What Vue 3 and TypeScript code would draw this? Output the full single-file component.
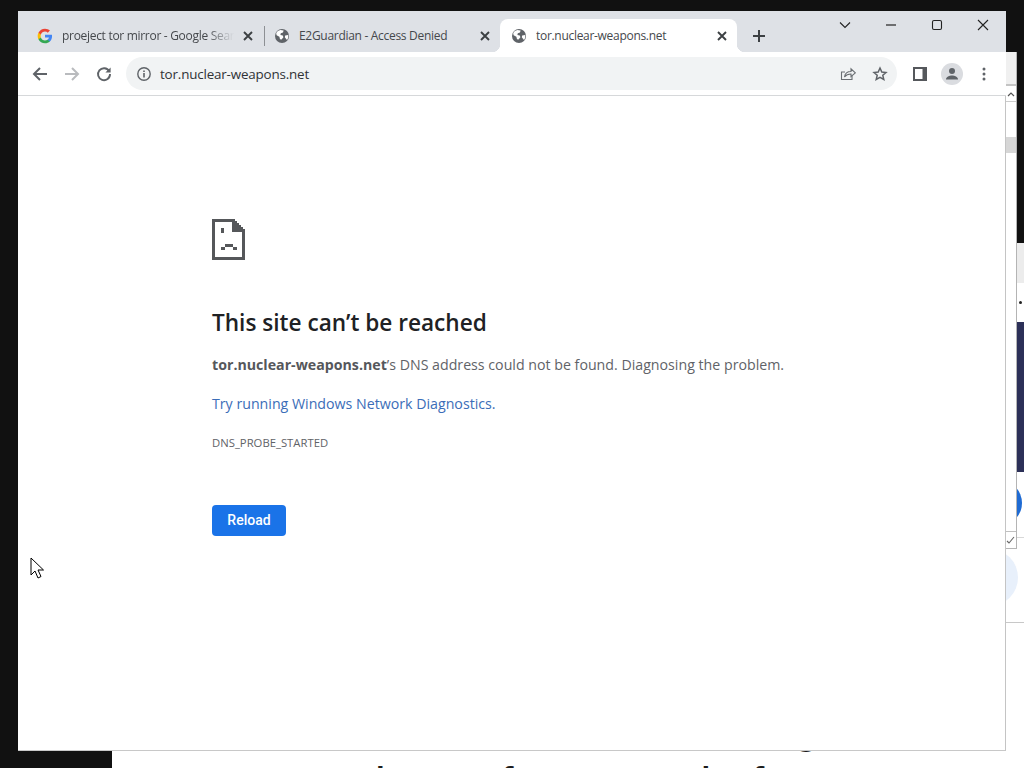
<script setup lang="ts">
interface Tab {
  title: string
  active: boolean
  favicon: 'google' | 'globe'
  fade: boolean
}

const tabs: Tab[] = [
  { title: 'proeject tor mirror - Google Search', active: false, favicon: 'google', fade: true },
  { title: 'E2Guardian - Access Denied', active: false, favicon: 'globe', fade: false },
  { title: 'tor.nuclear-weapons.net', active: true, favicon: 'globe', fade: false },
]
</script>

<template>
  <div class="desktop">
    <!-- windows behind the browser -->
    <div class="back-page">
      <div class="bp-top"></div>
      <div class="bp-nav"><span class="bp-dot"></span></div>
      <div class="bp-hero"></div>
      <div class="bp-band one"><span class="bp-circle"></span></div>
      <div class="bp-band two"><span class="bp-soft"></span></div>
      <div class="bp-text">
        <div class="line first">g</div>
        <div class="line second">mirror of some url of</div>
      </div>
    </div>
    <div class="back-dialog">
      <div class="bd-head"></div>
      <div class="bd-arrow">
        <svg width="10" height="10" viewBox="0 0 10 10"><path d="M2 7l3-3 3 3" fill="none" stroke="#555" stroke-width="1.2" /></svg>
      </div>
      <div class="bd-track"><span class="bd-thumb"></span></div>
      <div class="bd-check">
        <svg width="10" height="10" viewBox="0 0 10 10"><path d="M1 6l2 2 5-6" fill="none" stroke="#666" stroke-width="1.1" /></svg>
      </div>
    </div>

    <!-- browser -->
    <div class="browser">
      <div class="tabstrip">
        <div
          v-for="tab in tabs"
          :key="tab.title"
          class="tab"
          :class="{ active: tab.active }"
        >
          <svg v-if="tab.favicon === 'google'" class="fav" viewBox="0 0 24 24">
            <path fill="#4285F4" d="M22.56 12.25c0-.78-.07-1.53-.2-2.25H12v4.26h5.92c-.26 1.37-1.04 2.53-2.21 3.31v2.77h3.57c2.08-1.92 3.28-4.74 3.28-8.09z" />
            <path fill="#34A853" d="M12 23c2.97 0 5.46-.98 7.28-2.66l-3.57-2.77c-.98.66-2.23 1.06-3.71 1.06-2.86 0-5.29-1.93-6.16-4.53H2.18v2.84C3.99 20.53 7.7 23 12 23z" />
            <path fill="#FBBC05" d="M5.84 14.09c-.22-.66-.35-1.36-.35-2.09s.13-1.43.35-2.09V7.07H2.18C1.43 8.55 1 10.22 1 12s.43 3.45 1.18 4.93l3.66-2.84z" />
            <path fill="#EA4335" d="M12 5.38c1.62 0 3.06.56 4.21 1.64l3.15-3.15C17.45 2.09 14.97 1 12 1 7.7 1 3.99 3.47 2.18 7.07l3.66 2.84c.87-2.6 3.3-4.53 6.16-4.53z" />
          </svg>
          <svg v-else class="fav" viewBox="0 0 16 16">
            <circle cx="8" cy="8" r="7" fill="#5f6368" />
            <path fill="#fff" d="M2.2 5.2C3 3.6 4.6 2.4 6.4 2.1L9.6 2.6 9 4.6 6.8 5.2 6.4 7 8.8 7.6 9.4 9.2 7.6 11.4 6 11.2 5.4 8.8 2.6 7.2z" />
            <path fill="#fff" d="M11.2 7.6l3-.6c.3 1.8-.2 3.6-1.2 5l-1-1.2-1.2-1.6z" />
          </svg>
          <span class="title" :class="{ fade: tab.fade }">{{ tab.title }}</span>
          <svg class="tab-close" viewBox="0 0 12 12">
            <path d="M2 2l8 8M10 2l-8 8" stroke="#3c4043" stroke-width="1.9" fill="none" />
          </svg>
        </div>
        <div class="new-tab">
          <svg width="14" height="14" viewBox="0 0 14 14"><path d="M7 1v12M1 7h12" stroke="#3c4043" stroke-width="2" fill="none" /></svg>
        </div>
        <div class="win-controls">
          <div class="win-btn">
            <svg width="12" height="12" viewBox="0 0 12 12"><path d="M1 3.5l5 5 5-5" stroke="#222" stroke-width="1.1" fill="none" /></svg>
          </div>
          <div class="win-btn">
            <svg width="12" height="12" viewBox="0 0 12 12"><path d="M1 6h10" stroke="#222" stroke-width="1.2" fill="none" /></svg>
          </div>
          <div class="win-btn">
            <svg width="12" height="12" viewBox="0 0 12 12"><rect x="1.5" y="1.5" width="9" height="9" rx="1.5" stroke="#222" stroke-width="1.1" fill="none" /></svg>
          </div>
          <div class="win-btn">
            <svg width="12" height="12" viewBox="0 0 12 12"><path d="M1 1l10 10M11 1L1 11" stroke="#222" stroke-width="1.1" fill="none" /></svg>
          </div>
        </div>
      </div>

      <div class="toolbar">
        <div class="tool">
          <svg width="16" height="16" viewBox="0 0 16 16"><path d="M15 8H2M8 2L2 8l6 6" stroke="#5f6368" stroke-width="2" fill="none" /></svg>
        </div>
        <div class="tool">
          <svg width="16" height="16" viewBox="0 0 16 16"><path d="M1 8h13M8 2l6 6-6 6" stroke="#b9bbbe" stroke-width="2" fill="none" /></svg>
        </div>
        <div class="tool">
          <svg width="16" height="16" viewBox="0 0 16 16">
            <path d="M13.2 5.2A6 6 0 1 0 14 8" stroke="#5f6368" stroke-width="1.9" fill="none" />
            <path d="M14.6 1.4v5.2H9.4z" fill="#5f6368" />
          </svg>
        </div>
        <div class="omnibox">
          <svg class="info" width="16" height="16" viewBox="0 0 16 16">
            <circle cx="8" cy="8" r="6.2" stroke="#5f6368" stroke-width="1.4" fill="none" />
            <path d="M7.2 7h1.6v4.4H7.2zM7.2 4.4h1.6V6H7.2z" fill="#5f6368" />
          </svg>
          <span class="url">tor.nuclear-weapons.net</span>
          <div class="tool share">
            <svg width="16" height="16" viewBox="0 0 16 16">
              <path d="M12 9.5v4H1.5V6H5" stroke="#6a6e72" stroke-width="1.1" fill="none" />
              <path d="M4.5 11c.5-3.5 3-5.5 6.500-5.500V2.800L15.300 6.800 11 10.600V8C8.200 8 6 9 4.500 11z" stroke="#6a6e72" stroke-width="1.1" fill="none" />
            </svg>
          </div>
          <div class="tool star">
            <svg width="16" height="16" viewBox="0 0 16 16">
              <path d="M8 2l1.800 4 4.200.5-3.200 2.800 1 4.200L8 11.300 4.200 13.500l1-4.200L2 6.500 6.200 6z" stroke="#5f6368" stroke-width="1.500" fill="none" />
            </svg>
          </div>
        </div>
        <div class="tool">
          <svg width="16" height="16" viewBox="0 0 16 16">
            <path fill-rule="evenodd" d="M1 1h14v14H1zM3 3v10h7.500V3z" fill="#55585c" />
          </svg>
        </div>
        <div class="tool">
          <span class="avatar">
            <svg width="16" height="16" viewBox="0 0 16 16">
              <circle cx="8" cy="5" r="3" fill="#5f6368" />
              <path d="M2 13.500c0-2.600 3.500-4 6-4s6 1.400 6 4z" fill="#5f6368" />
            </svg>
          </span>
        </div>
        <div class="tool">
          <svg width="16" height="16" viewBox="0 0 16 16">
            <circle cx="8" cy="3" r="1.500" fill="#5f6368" />
            <circle cx="8" cy="8" r="1.500" fill="#5f6368" />
            <circle cx="8" cy="13" r="1.500" fill="#5f6368" />
          </svg>
        </div>
      </div>

      <main class="content">
        <svg class="sad" width="33" height="41" viewBox="0 0 33 41" shape-rendering="crispEdges">
          <path fill="#55575a" fill-rule="evenodd" d="M0 0H23V2H25V4H27V6H29V8H31V10H33V41H0zM3 3V38H30V13H20V3z" />
          <path fill="#55575a" d="M9 9H12V14H9zM13 25H21V28H13zM9 28H13V31H9zM21 28H25V31H21zM23 3H25V5H27V7H29V9H31V11H28V9H26V7H24V5H23z" />
        </svg>
        <h1>This site can’t be reached</h1>
        <p class="msg"><strong>tor.nuclear-weapons.net</strong>’s DNS address could not be found. Diagnosing the problem.</p>
        <p class="link">Try running Windows Network Diagnostics.</p>
        <p class="code">DNS_PROBE_STARTED</p>
        <button class="reload" type="button">Reload</button>
      </main>
    </div>

    <svg class="cursor" width="14" height="22" viewBox="0 0 14 22">
      <path d="M1 1v17l4-4 3 7 3-1.500-3-6.500h5.500z" fill="#fff" stroke="#000" stroke-width="1" stroke-linejoin="round" />
    </svg>
  </div>
</template>

<style scoped>
.desktop {
  position: relative;
  width: 1024px;
  height: 768px;
  background: #111;
  overflow: hidden;
  font-family: "Open Sans", "Noto Sans", sans-serif;
}

/* windows behind */
.back-page {
  position: absolute;
  left: 112px;
  right: 0;
  top: 243px;
  bottom: 0;
  background: #fff;
  display: flex;
  flex-direction: column;
  overflow: hidden;
}
.bp-top { height: 40px; background: #ececec; flex: none; }
.bp-nav { height: 39px; flex: none; position: relative; }
.bp-dot {
  position: absolute;
  right: 2px;
  top: 18px;
  width: 3px;
  height: 3px;
  border-radius: 50%;
  background: #222;
}
.bp-hero { height: 150px; background: #2c3058; flex: none; }
.bp-band { position: relative; flex: none; border-bottom: 1px solid #d8d8d8; overflow: hidden; }
.bp-band.one { height: 65px; }
.bp-band.two { height: 84px; border-bottom-color: #c8c8c8; }
.bp-circle {
  position: absolute;
  right: 2px;
  top: 8px;
  width: 46px;
  height: 46px;
  border-radius: 50%;
  background: #1f6bd3;
}
.bp-soft {
  position: absolute;
  right: 6px;
  top: 11px;
  width: 57px;
  height: 57px;
  border-radius: 50%;
  background: #e8f0fb;
}
.bp-text {
  font-family: "Liberation Sans", sans-serif;
  font-size: 48px;
  line-height: 54px;
  color: #1c1c1c;
  white-space: nowrap;
  padding-top: 76px;
}
.line.first { padding-left: 681px; }
.line.second { padding-left: 223px; margin-top: 5px; }

.back-dialog {
  position: absolute;
  left: 900px;
  top: 52px;
  width: 117px;
  height: 497px;
  background: #fff;
  border: 1px solid #b4b4b4;
  border-top: 0;
  box-sizing: border-box;
  display: flex;
  flex-direction: column;
  align-items: flex-end;
}
.bd-head {
  height: 32px;
  width: 100%;
  background: #f0f0f0;
  border-bottom: 2px solid #c4c4c4;
  flex: none;
}
.bd-arrow {
  height: 15px;
  width: 10px;
  flex: none;
  display: flex;
  align-items: center;
  justify-content: center;
  border-bottom: 1px solid #ccc;
}
.bd-track { flex: 1; width: 10px; position: relative; }
.bd-thumb {
  position: absolute;
  left: 0;
  right: 0;
  top: 35px;
  height: 16px;
  background: #d6d6d6;
}
.bd-check {
  width: 10px;
  height: 16px;
  flex: none;
  border-top: 1px solid #c0c0c0;
  display: flex;
  align-items: center;
  justify-content: center;
}

/* browser */
.browser {
  position: absolute;
  left: 18px;
  top: 11px;
  width: 988px;
  height: 740px;
  display: flex;
  flex-direction: column;
}
.tabstrip {
  height: 41px;
  flex: none;
  background: #dee1e6;
  box-sizing: border-box;
  padding: 8px 0 0 8px;
  display: flex;
  align-items: stretch;
}
.tab {
  flex: 0 0 237px;
  min-width: 0;
  box-sizing: border-box;
  padding: 0 9px 0 11px;
  display: flex;
  align-items: center;
  position: relative;
  font-size: 12px;
  letter-spacing: -0.3px;
  color: #45484c;
}
.tab + .tab::before {
  content: "";
  position: absolute;
  left: 1px;
  top: 7px;
  height: 20px;
  width: 1px;
  background: #8d9094;
}
.tab.active {
  background: #fff;
  border-radius: 8px 8px 0 0;
}
.tab.active::before {
  display: block;
  left: -8px;
  top: auto;
  bottom: 0;
  width: 8px;
  height: 8px;
  background: radial-gradient(circle at 0 0, transparent 8px, #fff 8.5px);
}
.tab.active::after {
  content: "";
  position: absolute;
  bottom: 0;
  right: -8px;
  width: 8px;
  height: 8px;
  background: radial-gradient(circle at 100% 0, transparent 8px, #fff 8.5px);
}
.fav { width: 16px; height: 16px; flex: none; margin-right: 9px; }
.title {
  flex: 1;
  min-width: 0;
  white-space: nowrap;
  overflow: hidden;
}
.title.fade {
  -webkit-mask-image: linear-gradient(to right, #000 84%, transparent 100%);
  mask-image: linear-gradient(to right, #000 84%, transparent 100%);
}
.tab-close { width: 12px; height: 12px; flex: none; margin: 0 0 0 8px; }
.new-tab {
  width: 28px;
  margin-left: 8px;
  display: flex;
  align-items: center;
  justify-content: center;
  flex: none;
}
.win-controls {
  margin-left: auto;
  margin-top: -8px;
  height: 28px;
  display: flex;
}
.win-btn {
  width: 46px;
  display: flex;
  align-items: center;
  justify-content: center;
}

.toolbar {
  height: 44px;
  flex: none;
  box-sizing: border-box;
  background: #fff;
  border-bottom: 1px solid #d6d8da;
  padding: 0 6px;
  display: flex;
  align-items: center;
}
.tool {
  width: 32px;
  height: 32px;
  flex: none;
  display: flex;
  align-items: center;
  justify-content: center;
}
.omnibox {
  flex: 1;
  height: 33px;
  margin: 0 7px 0 6px;
  border-radius: 17px;
  background: #f1f3f4;
  display: flex;
  align-items: center;
  padding-left: 10px;
}
.info { flex: none; margin-right: 8px; }
.url {
  flex: 1;
  font-size: 13.4px;
  letter-spacing: -0.17px;
  color: #303236;
  white-space: nowrap;
}
.share { margin-right: 0; }
.star { margin-right: 1px; }
.avatar {
  width: 22px;
  height: 22px;
  border-radius: 50%;
  background: #dadce0;
  display: flex;
  align-items: center;
  justify-content: center;
}

.content {
  flex: 1;
  background: #fff;
  border-right: 1px solid #c4c4c4;
  border-bottom: 1px solid #c8c8c8;
  padding: 123px 0 0 194px;
  color: #5f6368;
}
.sad { display: block; }
h1 {
  margin: 46px 0 0;
  font-size: 22.6px;
  line-height: 34px;
  font-weight: 600;
  color: #202124;
}
.msg {
  margin: 15px 0 0;
  font-size: 14.2px;
  line-height: 20px;
  color: #5f6368;
}
.msg strong { font-weight: 700; color: #55575b; }
.link {
  margin: 19px 0 0;
  font-size: 14.2px;
  line-height: 20px;
  color: #3b6db8;
}
.code {
  margin: 20px 0 0;
  font-size: 11.3px;
  line-height: 18px;
  color: #5f6368;
}
.reload {
  display: block;
  margin-top: 53px;
  width: 74px;
  height: 31px;
  border: 0;
  border-radius: 4px;
  background: #1a73e8;
  color: #fff;
  font-family: Roboto, sans-serif;
  font-size: 14px;
  font-weight: 500;
  padding: 0 0 1px;
}
.cursor {
  position: absolute;
  left: 30px;
  top: 557px;
}
</style>
